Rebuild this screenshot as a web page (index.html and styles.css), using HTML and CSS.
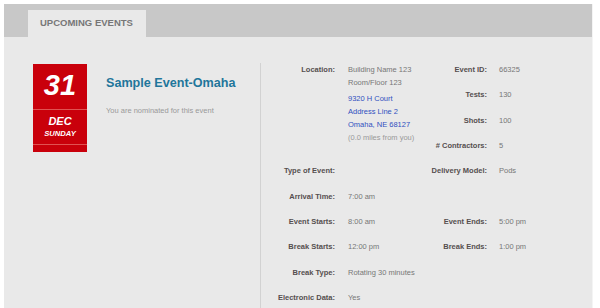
FILE: index.html
```html
<!DOCTYPE html>
<html lang="en">
<head>
    <meta charset="UTF-8">
    <meta name="viewport" content="width=device-width, initial-scale=1.0">
    <title>Upcoming Events</title>
    <link rel="stylesheet" href="styles.css">
</head>
<body>
    <div class="panel">
        <div class="panel-head">
            <div class="tab">UPCOMING EVENTS</div>
        </div>

        <div class="panel-body">
            <!-- Дата и название -->
            <div class="event-summary">
                <div class="date-box">
                    <div class="date-day">31</div>
                    <div class="date-month">
                        <span>DEC</span>
                        <span class="date-weekday">SUNDAY</span>
                    </div>
                    <div class="date-foot"></div>
                </div>
                <div class="event-intro">
                    <h2 class="event-title">Sample Event-Omaha</h2>
                    <p class="event-note">You are nominated for this event</p>
                </div>
            </div>

            <!-- Детали события -->
            <div class="event-details">
                <div class="lbl-a">Location:</div>
                <div class="val-a location">
                    <div>Building Name 123</div>
                    <div>Room/Floor 123</div>
                    <div class="address">
                        <a href="#">9320 H Court</a>
                        <a href="#">Address Line 2</a>
                        <a href="#">Omaha, NE 68127</a>
                    </div>
                    <div class="distance">(0.0 miles from you)</div>
                </div>
                <div class="lbl-b">Event ID:</div>
                <div class="val-b">66325</div>

                <div class="lbl-b">Tests:</div>
                <div class="val-b">130</div>

                <div class="lbl-b">Shots:</div>
                <div class="val-b">100</div>

                <div class="lbl-b"># Contractors:</div>
                <div class="val-b">5</div>

                <div class="lbl-a">Type of Event:</div>
                <div class="lbl-b">Delivery Model:</div>
                <div class="val-b">Pods</div>

                <div class="lbl-a">Arrival Time:</div>
                <div class="val-a">7:00 am</div>

                <div class="lbl-a">Event Starts:</div>
                <div class="val-a">8:00 am</div>
                <div class="lbl-b">Event Ends:</div>
                <div class="val-b">5:00 pm</div>

                <div class="lbl-a">Break Starts:</div>
                <div class="val-a">12:00 pm</div>
                <div class="lbl-b">Break Ends:</div>
                <div class="val-b">1:00 pm</div>

                <div class="lbl-a">Break Type:</div>
                <div class="val-a">Rotating 30 minutes</div>

                <div class="lbl-a">Electronic Data:</div>
                <div class="val-a">Yes</div>
            </div>
        </div>
    </div>
</body>
</html>
```

FILE: styles.css
```css
body {
    margin: 0;
    background-color: #fff;
    font-family: "Liberation Sans", Arial, sans-serif;
    overflow: hidden;
}
.panel {
    margin: 4px 7px 0 4px;
    background-color: #e9e9e9;
    border-right: 1px solid #f4f4f4;
    height: calc(100vh - 4px);
    overflow: hidden;
}
.panel-head {
    height: 33px;
    padding-left: 24px;
    background-color: #c8c8c8;
    display: flex;
    align-items: flex-end;
}
.tab {
    height: 27px;
    padding: 0 13px 2px 12px;
    box-sizing: border-box;
    line-height: 25px;
    background-color: #e9e9e9;
    color: #777;
    font-size: 9.5px;
    font-weight: bold;
}
.panel-body {
    display: flex;
    padding-top: 26px;
}
.event-summary {
    width: 227px;
    padding-left: 29px;
    display: flex;
}
.date-box {
    width: 54px;
    height: 88px;
    margin-top: 1px;
    background-color: #c9000b;
    color: #fff;
    font-style: italic;
    font-weight: bold;
    text-align: center;
    display: flex;
    flex-direction: column;
}
.date-day {
    height: 45px;
    line-height: 43px;
    font-size: 29px;
    border-bottom: 1px solid #e05252;
}
.date-month {
    height: 35px;
    font-size: 11px;
    display: flex;
    flex-direction: column;
    padding-top: 5px;
    box-sizing: border-box;
    line-height: 12px;
    border-bottom: 1px solid #e05252;
}
.date-weekday {
    font-size: 7.6px;
    line-height: 13px;
}
.event-intro {
    margin-left: 19px;
    padding-top: 12px;
}
.event-title {
    margin: 0;
    font-size: 12.6px;
    line-height: 16px;
    color: #1f769b;
    white-space: nowrap;
}
.event-note {
    margin: 15px 0 0;
    font-size: 7.5px;
    line-height: 10px;
    color: #999;
    white-space: nowrap;
}
.event-details {
    flex: 1;
    border-left: 1px solid #d2d2d2;
    display: grid;
    grid-template-columns: 74px 73px 79px 1fr;
    grid-auto-rows: 25.33px;
    font-size: 7.5px;
    line-height: 13px;
    color: #777;
}
.lbl-a, .lbl-b {
    text-align: right;
    font-weight: bold;
    color: #554f4f;
    white-space: nowrap;
}
.lbl-a {
    grid-column: 1;
}
.lbl-b {
    grid-column: 3;
}
.val-a {
    grid-column: 2;
    padding-left: 13px;
    white-space: nowrap;
}
.val-b {
    grid-column: 4;
    padding-left: 12px;
}
.location {
    grid-row: span 4;
}
.address {
    margin-top: 3px;
}
.address a {
    display: block;
    color: #3050c0;
    text-decoration: none;
}
.distance {
    color: #999;
}
```
